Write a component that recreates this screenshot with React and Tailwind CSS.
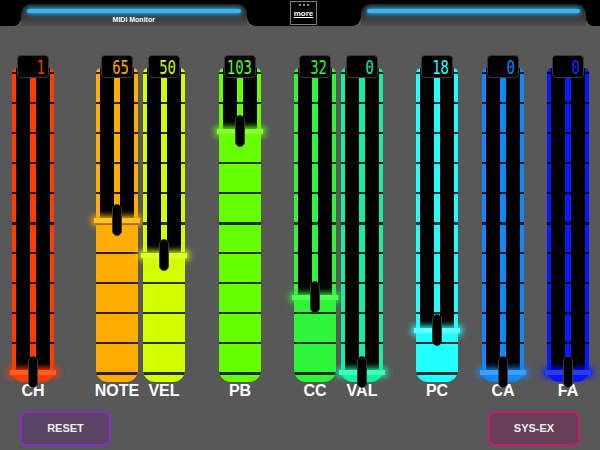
const SLIDERS = [
  { label: "CH", value: "1", pos: 0, gap: "ml-0", track: "bg-[#ff3d00]", glow: "bg-[#ff5a20] shadow-[0_0_6px_2px_#ff3d00]", text: "text-[#ff3300]" },
  { label: "NOTE", value: "65", pos: 65, gap: "ml-[42px]", track: "bg-[#ffad00]", glow: "bg-[#ffc030] shadow-[0_0_6px_2px_#ffad00]", text: "text-[#ffaa00]" },
  { label: "VEL", value: "50", pos: 50, gap: "ml-[5px]", track: "bg-[#d2ff00]", glow: "bg-[#e0ff30] shadow-[0_0_6px_2px_#d2ff00]", text: "text-[#ccff00]" },
  { label: "PB", value: "103", pos: 103, gap: "ml-[34px]", track: "bg-[#66ff00]", glow: "bg-[#88ff30] shadow-[0_0_6px_2px_#66ff00]", text: "text-[#55ff11]" },
  { label: "CC", value: "32", pos: 32, gap: "ml-[33px]", track: "bg-[#2ef53a]", glow: "bg-[#50ff5a] shadow-[0_0_6px_2px_#2ef53a]", text: "text-[#2ef53a]" },
  { label: "VAL", value: "0", pos: 0, gap: "ml-[5px]", track: "bg-[#14f0a0]", glow: "bg-[#40ffb8] shadow-[0_0_6px_2px_#14f0a0]", text: "text-[#14f0a0]" },
  { label: "PC", value: "18", pos: 18, gap: "ml-[33px]", track: "bg-[#22ffff]", glow: "bg-[#60ffff] shadow-[0_0_6px_2px_#22ffff]", text: "text-[#22ffff]" },
  { label: "CA", value: "0", pos: 0, gap: "ml-[24px]", track: "bg-[#1088ff]", glow: "bg-[#3aa0ff] shadow-[0_0_6px_2px_#1088ff]", text: "text-[#1088ff]" },
  { label: "FA", value: "0", pos: 0, gap: "ml-[23px]", track: "bg-[#0a18ff]", glow: "bg-[#2a3aff] shadow-[0_0_6px_2px_#0a18ff]", text: "text-[#1a2aff]" },
];

const LINES = [0, 1, 2, 3, 4, 5, 6, 7, 8, 9, 10];

function Tab({ title }) {
  return (
    <div className="flex-1 h-full bg-black">
      <div className="mt-[4px] h-[22px] rounded-t-[10px] bg-gradient-to-b from-[#1a1a1a] to-[#4e4e4e] px-[6px] pt-[5px] flex flex-col items-center">
        <div className="w-full h-[4px] rounded-full bg-[#38b6ec] shadow-[0_0_5px_1px_#38b6ec]" />
        <span className="mt-[2px] text-[7px] leading-[9px] font-bold text-white">{title}</span>
      </div>
    </div>
  );
}

function Slider({ s }) {
  // fill level: 0..127 over 297px, bottom at 304
  const f = Math.round(304 - (s.pos / 127) * 297);
  return (
    <div className={`flex flex-col items-center w-[42px] ${s.gap}`}>
      <div className="relative z-10 w-[32px] h-[23px] -mb-[10px] rounded-[4px] bg-black border border-[#3a3a3a] flex items-center justify-end pr-[3px]">
        <span className={`font-['DejaVu_Sans_Mono',monospace] text-[14px] leading-none scale-y-[1.35] ${s.text}`}>{s.value}</span>
      </div>
      <div className="relative w-[42px] h-[314px]">
        <div className={`relative w-full h-full overflow-hidden rounded-t-[5px] rounded-b-[12px] ${s.track}`}>
          <div className="absolute left-[4px] right-[4px] top-0 bg-black" style={{ height: f }} />
          <div className={`absolute left-[18px] w-[6px] top-[7px] ${s.track}`} style={{ height: Math.max(f - 7, 0) }} />
          {LINES.map((k) => (
            <div
              key={k}
              className={`absolute left-0 right-0 bg-black/80 ${k === 5 || k === 10 ? "h-[3px]" : "h-[1.5px]"}`}
              style={{ top: 4 + k * 30 }}
            />
          ))}
        </div>
        <div className={`absolute -left-[2px] -right-[2px] h-[5px] ${s.glow}`} style={{ top: f - 2 }} />
        <div className="absolute z-10 left-[16px] w-[10px] h-[32px] rounded-full bg-black border border-[#3c3c3c]" style={{ top: f - 16 }} />
      </div>
      <span className="h-[17px] leading-[17px] text-[16px] font-bold text-white whitespace-nowrap font-['Liberation_Sans',Arial,sans-serif]">
        {s.label}
      </span>
    </div>
  );
}

export default function App() {
  return (
    <div className="w-[600px] h-[450px] overflow-hidden bg-[#585858] font-['Liberation_Sans',Arial,sans-serif]">
      {/* top bar */}
      <div className="flex h-[26px]">
        <div className="w-[21px] h-full bg-black rounded-br-[8px]" />
        <Tab title="MIDI Monitor" />
        <div className="w-[114px] h-full bg-black rounded-b-[9px] flex justify-center pt-[1px]">
          <div className="w-[27px] h-[24px] border border-[#808080] bg-black flex flex-col items-center pt-[2px]">
            <div className="flex gap-[2px]">
              <span className="w-[2px] h-[2px] rounded-full bg-[#bbb]" />
              <span className="w-[2px] h-[2px] rounded-full bg-[#bbb]" />
              <span className="w-[2px] h-[2px] rounded-full bg-[#bbb]" />
            </div>
            <span className="mt-[3px] text-[8px] leading-[9px] font-bold text-white underline">more</span>
          </div>
        </div>
        <Tab title="" />
        <div className="w-[14px] h-full bg-black rounded-bl-[8px]" />
      </div>

      {/* sliders */}
      <div className="flex pl-[12px] pt-[29px]">
        {SLIDERS.map((s) => (
          <Slider key={s.label} s={s} />
        ))}
      </div>

      {/* buttons */}
      <div className="flex justify-between px-[20px] mt-[12px]">
        <button className="w-[91px] h-[35px] rounded-[7px] border-2 border-[#8530c4] bg-[#5a4466] text-[11px] font-bold text-[#eeeeee]">
          RESET
        </button>
        <button className="w-[92px] h-[35px] rounded-[7px] border-2 border-[#c21f72] bg-[#683e58] text-[11px] font-bold text-[#eeeeee]">
          SYS-EX
        </button>
      </div>
    </div>
  );
}
